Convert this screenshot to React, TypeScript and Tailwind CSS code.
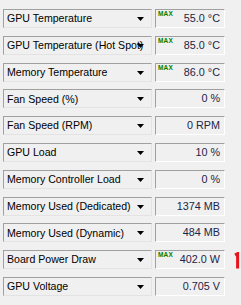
import React from "react";

type Row = { label: string; value: string; max?: boolean };

const rows: Row[] = [
  { label: "GPU Temperature", value: "55.0 °C", max: true },
  { label: "GPU Temperature (Hot Spot)", value: "85.0 °C", max: true },
  { label: "Memory Temperature", value: "86.0 °C", max: true },
  { label: "Fan Speed (%)", value: "0 %" },
  { label: "Fan Speed (RPM)", value: "0 RPM" },
  { label: "GPU Load", value: "10 %" },
  { label: "Memory Controller Load", value: "0 %" },
  { label: "Memory Used (Dedicated)", value: "1374 MB" },
  { label: "Memory Used (Dynamic)", value: "484 MB" },
  { label: "Board Power Draw", value: "402.0 W", max: true },
  { label: "GPU Voltage", value: "0.705 V" },
];

function Arrow() {
  return (
    <svg width="7" height="4" viewBox="0 0 7 4" className="absolute right-[7px] top-[7px]">
      <path d="M0 0H7L3.5 4Z" fill="#000" />
    </svg>
  );
}

export default function App() {
  return (
    <div
      className="w-[241px] h-[305px] bg-[#f0f0f0] pt-[9px] pl-[3px] flex flex-col gap-[7.8px] overflow-hidden"
      style={{ fontFamily: '"Liberation Sans", Arial, sans-serif' }}
    >
      {rows.map((r, i) => (
        <div key={i} className="flex h-[19px] shrink-0">
          <div className="relative w-[149px] h-full border border-t-[#a0a0a0] border-l-[#a0a0a0] border-b-[#e3e3e3] border-r-[#e3e3e3] bg-[#f0f0f0] overflow-hidden">
            <div className="absolute left-[3px] top-0 h-full flex items-center whitespace-nowrap text-[10.6px] leading-none text-black">
              {r.label}
            </div>
            <Arrow />
          </div>
          <div className="w-[3px]" />
          <div className="relative w-[70px] h-full border border-t-[#a0a0a0] border-l-[#a0a0a0] border-b-[#ffffff] border-r-[#ffffff] bg-[#f0f0f0]">
            {r.max && (
              <div className="absolute left-[2px] top-[1px] text-[6.5px] leading-none font-bold text-[#008000] tracking-[0.2px]">
                MAX
              </div>
            )}
            <div className="absolute right-[4px] top-0 h-full flex items-center whitespace-nowrap text-[10.8px] leading-none text-[#1c2448]">
              {r.value}
            </div>
          </div>
          <div className="flex-1 relative">
            {i === 9 && (
              <svg width="7" height="17" viewBox="0 0 7 17" className="absolute left-[9px] top-[2px]">
                <path d="M1 3L3.6 1.6V16.5" stroke="#e8141c" strokeWidth="3" fill="none" />
              </svg>
            )}
          </div>
        </div>
      ))}
    </div>
  );
}
